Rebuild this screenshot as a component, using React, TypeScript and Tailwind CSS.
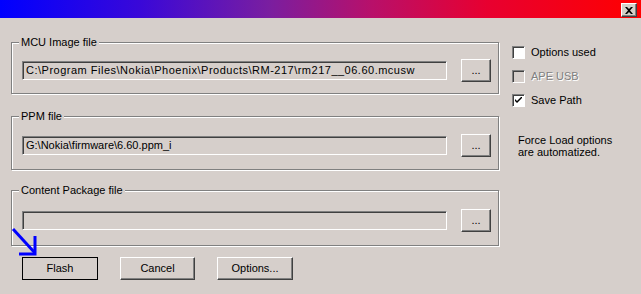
import React from 'react';

const BG = 'bg-[#d6cfcb]';

const GroupBox = ({ label, value, className, valueClass = '' }: { label: string; value: string; className: string; valueClass?: string }) => (
  <div className={`relative w-[488px] border border-[#808080] shadow-[inset_1px_1px_0_#fff,1px_1px_0_#fff] flex items-center pl-[10px] pt-[4px] ${className}`}>
    <span className={`absolute left-[7px] top-[-8px] px-[2px] leading-[14px] ${BG}`}>{label}</span>
    <div className={`w-[425px] h-[19px] border-t border-l border-t-[#808080] border-l-[#808080] border-b border-r border-b-white border-r-white shadow-[inset_1px_1px_0_#404040] flex items-center pl-[3px] pt-[1px] leading-none whitespace-nowrap overflow-hidden ${valueClass}`}>
      {value}
    </div>
    <Button className="ml-[14px] w-[30px] h-[23px]">...</Button>
  </div>
);

const Button = ({ children, className }: { children: React.ReactNode; className: string }) => (
  <button className={`border-t border-l border-t-white border-l-white border-r border-b border-r-[#404040] border-b-[#404040] shadow-[inset_-1px_-1px_0_#808080] flex items-center justify-center leading-none ${className}`}>
    {children}
  </button>
);

const Check = ({ label, checked, disabled }: { label: string; checked?: boolean; disabled?: boolean }) => (
  <div className="flex items-center h-[13px]">
    <div
      className={`w-[13px] h-[13px] border-t border-l border-t-[#808080] border-l-[#808080] border-b border-r border-b-white border-r-white shadow-[inset_1px_1px_0_#404040] flex items-center justify-center ${disabled ? '' : 'bg-white'}`}
    >
      {checked && (
        <svg width="7" height="7" viewBox="0 0 7 7">
          <path d="M0 2 L0 4 L2 6 L7 1 L7 -1 L2 4 Z" fill="#000" />
        </svg>
      )}
    </div>
    <span className={`ml-[6px] ${disabled ? 'text-[#808080] [text-shadow:1px_1px_0_#fff]' : ''}`}>{label}</span>
  </div>
);

export default function App() {
  return (
    <div className={`relative w-[641px] h-[294px] overflow-hidden ${BG} text-black text-[11px] font-['Liberation_Sans',Arial,sans-serif]`}>
      {/* title bar */}
      <div className="h-[18px] flex justify-end items-start pt-[3px] pr-[4px] bg-[linear-gradient(to_right,#0000ff,#3a08d8_22%,#7a1ea0_42%,#b8106a_58%,#e80030_76%,#ff0000)]">
        <div className="w-[16px] h-[14px] bg-[#d4d0c8] border-t border-l border-t-white border-l-white border-r border-b border-r-[#404040] border-b-[#404040] shadow-[inset_-1px_-1px_0_#808080] flex items-center justify-center">
          <svg width="8" height="7" viewBox="0 0 8 7">
            <path d="M0 0 L2 0 L4 2 L6 0 L8 0 L5 3.5 L8 7 L6 7 L4 5 L2 7 L0 7 L3 3.5 Z" fill="#000" />
          </svg>
        </div>
      </div>

      <div className="flex">
        {/* left column */}
        <div className="pl-[11px] pt-[24px]">
          <GroupBox
            label="MCU Image file"
            value="C:\Program Files\Nokia\Phoenix\Products\RM-217\rm217__06.60.mcusw"
            className="h-[52px]"
            valueClass="tracking-[0.5px]"
          />
          <GroupBox label="PPM file" value="G:\Nokia\firmware\6.60.ppm_i" className="h-[54px] mt-[22px]" />
          <GroupBox label="Content Package file" value="" className="h-[56px] mt-[20px]" />
          <div className="flex gap-[22px] pl-[11px] mt-[11px]">
            <button className="w-[76px] h-[23px] border border-black flex items-center justify-center leading-none">Flash</button>
            <Button className="w-[75px] h-[23px]">Cancel</Button>
            <Button className="w-[76px] h-[23px]">Options...</Button>
          </div>
        </div>

        {/* right column */}
        <div className="pl-[13px] pt-[28px] flex flex-col">
          <div className="flex flex-col gap-[11px]">
            <Check label="Options used" />
            <Check label="APE USB" disabled />
            <Check label="Save Path" checked />
          </div>
          <p className="ml-[6px] mt-[27px] leading-[12px]">
            Force Load options
            <br />
            are automatized.
          </p>
        </div>
      </div>

      {/* pointer arrow drawn over the dialog */}
      <svg className="absolute left-0 top-0" width="641" height="294">
        <path d="M13 229 L35 253" stroke="#0000ff" strokeWidth="3" fill="none" />
        <path d="M35 236 L35 254 L19 254" stroke="#0000ff" strokeWidth="3" fill="none" />
      </svg>
    </div>
  );
}
